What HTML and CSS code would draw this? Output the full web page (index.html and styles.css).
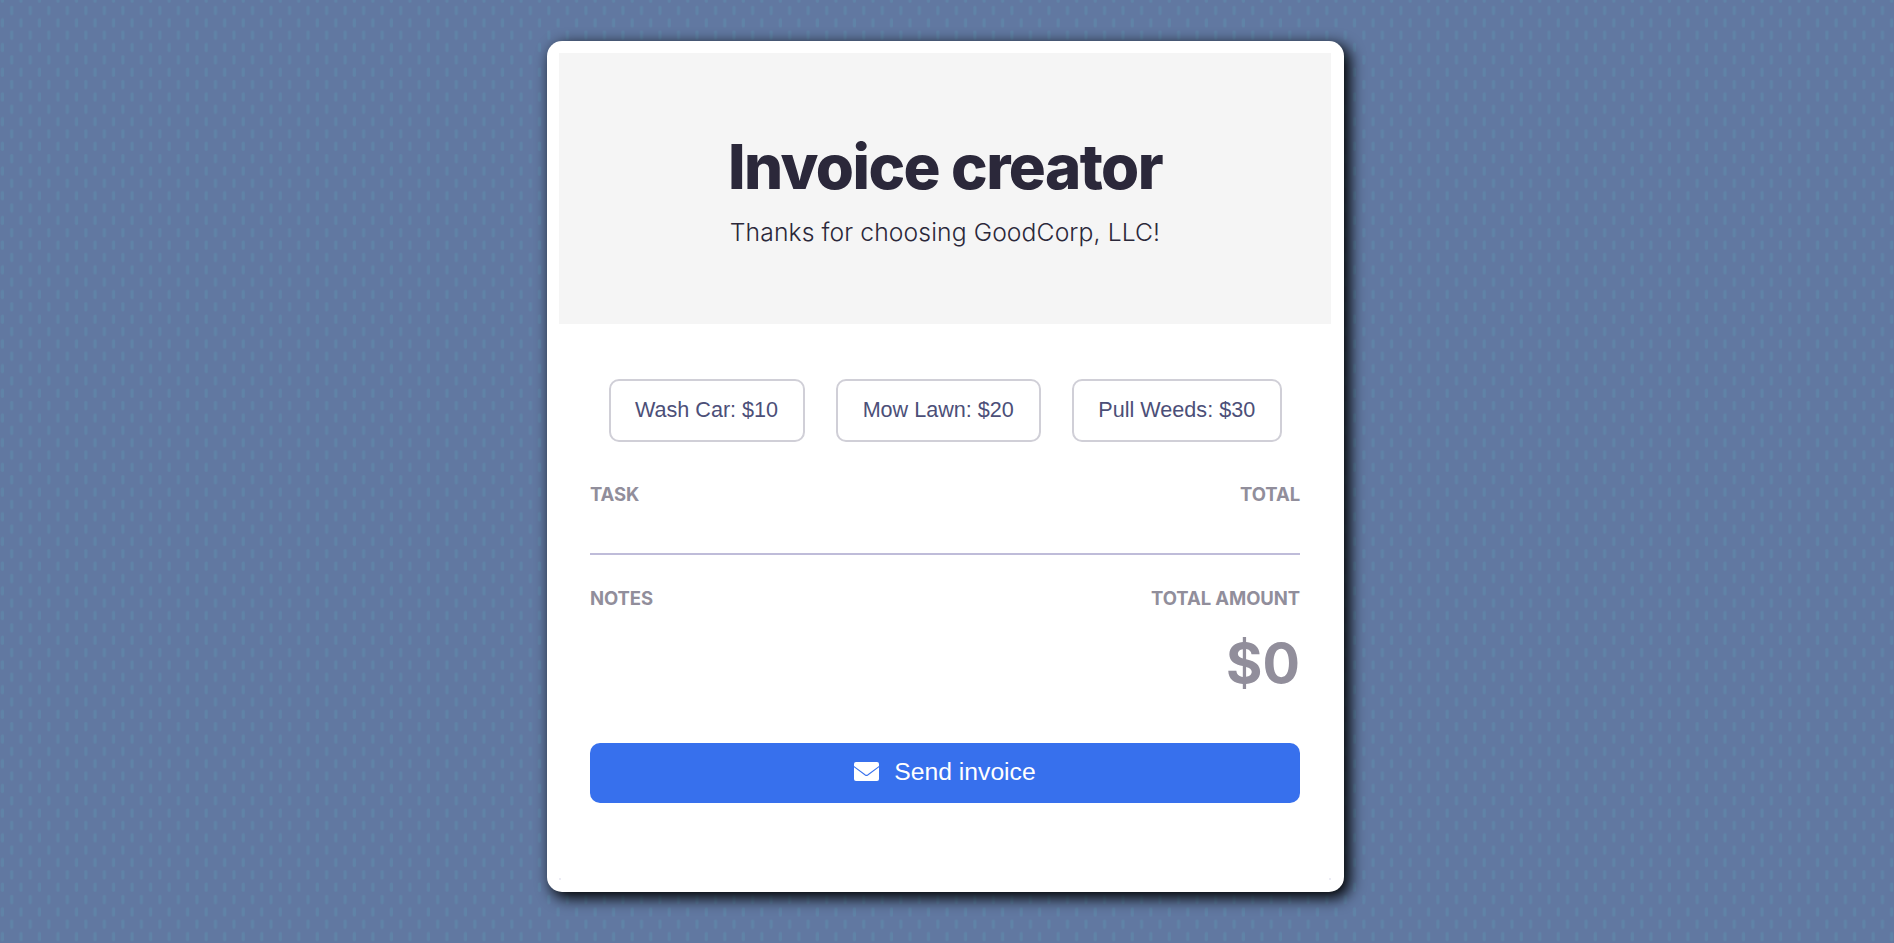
FILE: index.html
```html
<!DOCTYPE html>
<html lang="en">
<head>
<meta charset="utf-8">
<title>Invoice creator</title>
<link rel="stylesheet" href="styles.css">
</head>
<body>
<svg class="backdrop" aria-hidden="true">
  <defs>
    <pattern id="rain" width="12" height="16" patternUnits="userSpaceOnUse" patternTransform="translate(4 5.8) scale(1.5435)">
      <rect class="drop" x="4" y="0" width="2" height="6" rx="1"/>
      <rect class="drop" x="10" y="8" width="2" height="6" rx="1"/>
    </pattern>
  </defs>
  <rect width="100%" height="100%" fill="url(#rain)"/>
</svg>
<main class="card">
  <header class="header">
    <h1 class="title">Invoice creator</h1>
    <p class="subtitle">Thanks for choosing GoodCorp, LLC!</p>
  </header>
  <div class="content">
    <div class="services">
      <button class="service service-wash">Wash Car: $10</button>
      <button class="service service-mow">Mow Lawn: $20</button>
      <button class="service service-weeds">Pull Weeds: $30</button>
    </div>
    <div class="row tasks">
      <h2 class="label">TASK</h2>
      <h2 class="label">TOTAL</h2>
    </div>
    <div class="row summary">
      <h2 class="label">NOTES</h2>
      <div class="amount">
        <h2 class="label">TOTAL AMOUNT</h2>
        <p class="sum">$0</p>
      </div>
    </div>
    <button class="send">
      <svg class="envelope" viewBox="0 0 25 19" aria-hidden="true">
        <rect width="25" height="19" rx="2" fill="#fff"/>
        <path class="flap" d="M-.5 4.200 11.300 13Q12.500 13.800 13.700 13L25.500 4.200"/>
      </svg>
      <span>Send invoice</span>
    </button>
  </div>
</main>
</body>
</html>
```
FILE: styles.css
```css
* {
  box-sizing: border-box;
  margin: 0;
}

body {
  height: 943px;
  padding-top: 40.5px;
  overflow: hidden;
  background: #6178a1;
  font-family: Inter, "Liberation Sans", sans-serif;
  color: #2b283a;
}

.backdrop {
  position: absolute;
  inset: 0;
  z-index: -1;
  width: 100%;
  height: 100%;
}

.drop {
  fill: #6083a7;
}

.card {
  width: 797px;
  height: 851px;
  margin-left: 546.5px;
  padding: 12.5px 12.5px;
  border-radius: 15px;
  background:
    linear-gradient(#ececf4, #ececf4) 12.5px 837px / 2px 2px no-repeat,
    linear-gradient(#ececf4, #ececf4) 782.5px 837px / 2px 2px no-repeat,
    #fff;
  box-shadow: 5px 5px 15px 1px #000;
}

.header {
  display: flex;
  flex-direction: column;
  align-items: center;
  height: 271px;
  padding-top: 76px;
  background: #f5f5f5;
}

.title {
  font-size: 61.7px;
  line-height: 75px;
  font-weight: 800;
  letter-spacing: -1.55px;
}

.subtitle {
  margin-top: 12.5px;
  font-size: 24.7px;
  line-height: 30px;
  font-weight: 300;
  letter-spacing: 0.1px;
}

.content {
  padding: 55px 31px 0;
}

.services {
  display: flex;
  justify-content: center;
  gap: 31.5px;
}

.service {
  height: 63px;
  padding: 0 0 2px;
  border: 2px solid #d0cfd7;
  border-radius: 10px;
  background: #fff;
  color: #4c4f78;
  font: 21.6px "Liberation Sans", sans-serif;
}

.service-wash {
  width: 196px;
}

.service-mow {
  width: 204.5px;
}

.service-weeds {
  width: 209.5px;
}

.row {
  display: flex;
  justify-content: space-between;
}

.tasks {
  height: 113px;
  padding-top: 40px;
  border-bottom: 2.5px solid #bfbcd9;
}

.label {
  color: #918e9b;
  font-size: 18.5px;
  line-height: 24px;
  font-weight: 700;
  letter-spacing: -0.1px;
}

.summary {
  height: 188px;
  padding-top: 31px;
}

.amount {
  text-align: right;
}

.sum {
  margin-top: 19px;
  color: #918e9b;
  font-size: 55.6px;
  line-height: 68px;
  font-weight: 700;
}

.send {
  display: flex;
  justify-content: center;
  align-items: center;
  gap: 15px;
  width: 100%;
  height: 59.5px;
  padding: 0 0 2px;
  border: 0;
  border-radius: 10px;
  background: #3770ed;
  color: #fff;
  font: 24.7px "Liberation Sans", sans-serif;
}

.envelope {
  width: 25px;
  height: 19px;
  margin-top: -1px;
}

.flap {
  fill: none;
  stroke: #3770ed;
  stroke-width: 1.1;
}
```
